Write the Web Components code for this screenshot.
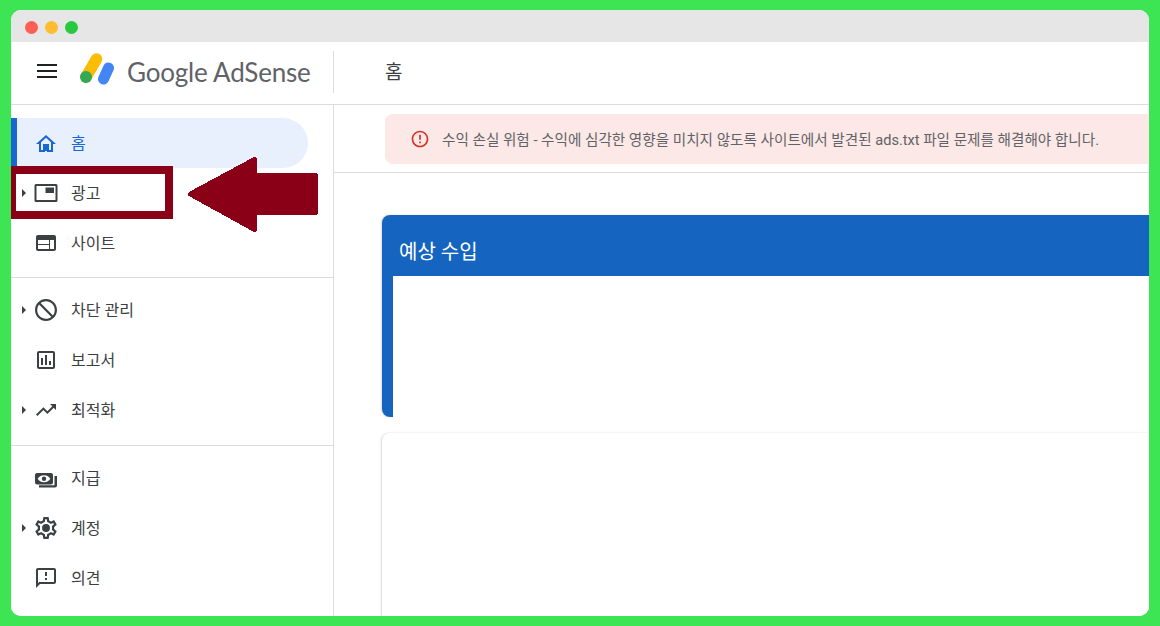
<!DOCTYPE html>
<html lang="ko">
<head>
<meta charset="utf-8">
<title>AdSense</title>
<style>
  html, body { margin: 0; height: 100%; }
  body { font-family: Roboto, "Noto Sans CJK KR", sans-serif; background: #3de554; overflow: hidden; }
</style>
</head>
<body>
<app-window>
  <title-bar></title-bar>
  <top-bar heading="홈"></top-bar>
  <side-nav slot="nav">
    <nav-item icon="home" active>홈</nav-item>
    <nav-item icon="ads" caret>광고</nav-item>
    <nav-item icon="web">사이트</nav-item>
    <nav-rule></nav-rule>
    <nav-item icon="block" caret>차단 관리</nav-item>
    <nav-item icon="report">보고서</nav-item>
    <nav-item icon="trend" caret>최적화</nav-item>
    <nav-rule style="margin-top:10px"></nav-rule>
    <nav-item icon="pay">지급</nav-item>
    <nav-item icon="gear" caret>계정</nav-item>
    <nav-item icon="feedback">의견</nav-item>
  </side-nav>
  <main-pane slot="main">
    <alert-bar>수익 손실 위험 - 수익에 심각한 영향을 미치지 않도록 사이트에서 발견된 ads.txt 파일 문제를 해결해야 합니다.</alert-bar>
    <earnings-card>예상 수입</earnings-card>
    <blank-card></blank-card>
  </main-pane>
</app-window>
<arrow-callout></arrow-callout>

<script>
const ICONS = {
  home: `<path d="M12 5.69l5 4.5V18h-2v-6H9v6H7v-7.81l5-4.5M12 3L2 12h3v8h6v-6h2v6h6v-8h3L12 3z"/><rect x="9" y="12" width="6" height="7"/>`,
  ads: `<path fill-rule="evenodd" d="M2 3h20a1.5 1.5 0 0 1 1.5 1.5v15A1.5 1.5 0 0 1 22 21H2a1.5 1.5 0 0 1-1.5-1.5v-15A1.5 1.5 0 0 1 2 3zm.5 2v14h19V5z"/><rect x="11.5" y="6.5" width="8.5" height="5.5"/>`,
  web: `<path d="M20 4H4c-1.1 0-2 .9-2 2v12c0 1.1.9 2 2 2h16c1.1 0 2-.9 2-2V6c0-1.1-.9-2-2-2zM15 18H4v-4h11v4zm0-5H4V9h11v4zm5 5h-4V9h4v9z"/>`,
  block: `<path d="M12 1C5.93 1 1 5.93 1 12s4.93 11 11 11 11-4.93 11-11S18.07 1 12 1zM3.2 12c0-4.86 3.94-8.8 8.8-8.8 2.04 0 3.9.7 5.39 1.86L5.06 17.39A8.75 8.75 0 0 1 3.2 12zm8.8 8.8c-2.04 0-3.9-.7-5.39-1.86L18.94 6.61A8.75 8.75 0 0 1 20.8 12c0 4.86-3.94 8.8-8.8 8.8z" transform="matrix(-1 0 0 1 24 0)"/>`,
  report: `<path d="M19 3H5c-1.1 0-2 .9-2 2v14c0 1.1.9 2 2 2h14c1.1 0 2-.9 2-2V5c0-1.1-.9-2-2-2zm0 16H5V5h14v14zM7 10h2v7H7zm4-3h2v10h-2zm4 6h2v4h-2z"/>`,
  trend: `<path d="M16 6l2.29 2.29-4.88 4.88-4-4L2 16.59 3.41 18l6-6 4 4 6.3-6.29L22 12V6z"/>`,
  pay: `<path fill-rule="evenodd" d="M3 7h14a2 2 0 0 1 2 2v7.5a2 2 0 0 1-2 2H3a2 2 0 0 1-2-2V9a2 2 0 0 1 2-2zm7 2.2c-3 0-5.4 1.6-6.3 3.5.9 1.9 3.3 3.5 6.3 3.5s5.4-1.6 6.3-3.5c-.9-1.9-3.3-3.5-6.3-3.5z"/><circle cx="10" cy="12.7" r="2.2"/><path d="M20.5 10H23v9.5a2 2 0 0 1-2 2H5v-2.3h15.5z"/>`,
  gear: `<g transform="translate(12 12) scale(1.1) translate(-12 -12)"><path d="M19.43 12.98c.04-.32.07-.64.07-.98 0-.34-.03-.66-.07-.98l2.11-1.65c.19-.15.24-.42.12-.64l-2-3.46c-.09-.16-.26-.25-.44-.25-.06 0-.12.01-.17.03l-2.49 1c-.52-.4-1.08-.73-1.69-.98l-.38-2.65C14.46 2.18 14.25 2 14 2h-4c-.25 0-.46.18-.49.42l-.38 2.65c-.61.25-1.17.59-1.69.98l-2.49-1c-.06-.02-.12-.03-.18-.03-.17 0-.34.09-.43.25l-2 3.46c-.13.22-.07.49.12.64l2.11 1.65c-.04.32-.07.65-.07.98 0 .33.03.66.07.98l-2.11 1.65c-.19.15-.24.42-.12.64l2 3.46c.09.16.26.25.44.25.06 0 .12-.01.17-.03l2.49-1c.52.4 1.08.73 1.69.98l.38 2.65c.03.24.24.42.49.42h4c.25 0 .46-.18.49-.42l.38-2.65c.61-.25 1.17-.59 1.69-.98l2.49 1c.06.02.12.03.18.03.17 0 .34-.09.43-.25l2-3.46c.12-.22.07-.49-.12-.64l-2.11-1.65zm-1.98-1.71c.04.31.05.52.05.73 0 .21-.02.43-.05.73l-.14 1.13.89.7 1.08.84-.7 1.21-1.27-.51-1.04-.42-.9.68c-.43.32-.84.56-1.25.73l-1.06.43-.16 1.13-.2 1.35h-1.4l-.19-1.35-.16-1.13-1.06-.43c-.43-.18-.83-.41-1.23-.71l-.91-.7-1.06.43-1.27.51-.7-1.21 1.08-.84.89-.7-.14-1.13c-.03-.31-.05-.54-.05-.74s.02-.43.05-.73l.14-1.13-.89-.7-1.08-.84.7-1.21 1.27.51 1.04.42.9-.68c.43-.32.84-.56 1.25-.73l1.06-.43.16-1.13.2-1.35h1.39l.19 1.35.16 1.13 1.06.43c.43.18.83.41 1.23.71l.91.7 1.06-.43 1.27-.51.7 1.21-1.07.85-.89.7.14 1.13z"/><circle cx="12" cy="12" r="3.6"/></g>`,
  feedback: `<path d="M20 2H4c-1.1 0-2 .9-2 2v18l4-4h14c1.1 0 2-.9 2-2V4c0-1.1-.9-2-2-2zm0 14H5.17L4 17.17V4h16v12zM11 12h2v2h-2zm0-6h2v4h-2z"/>`
};

class AppWindow extends HTMLElement {
  constructor() {
    super();
    this.attachShadow({ mode: "open" });
    this.shadowRoot.innerHTML = `
      <style>
      :host { display: block; box-sizing: border-box; height: 626px; padding: 10px 11px; }
      .frame { display: flex; flex-direction: column; height: 606px; border-radius: 10px; overflow: hidden; background: #fff; }
      .body { display: flex; flex: 1; min-height: 0; }
      </style>
      <div class="frame">
        <slot></slot>
        <div class="body">
          <slot name="nav"></slot>
          <slot name="main"></slot>
        </div>
      </div>
    `;
  }
}

class TitleBar extends HTMLElement {
  constructor() {
    super();
    this.attachShadow({ mode: "open" });
    this.shadowRoot.innerHTML = `
      <style>
      :host { display: flex; align-items: center; gap: 7px; height: 32px; padding: 2px 0 0 14px; box-sizing: border-box; background: #e6e6e6; }
      i { width: 13px; height: 13px; border-radius: 50%; display: block; }
      </style>
      <i style="background:#ff5f57"></i><i style="background:#febc2e"></i><i style="background:#28c840"></i>
    `;
  }
}

class TopBar extends HTMLElement {
  constructor() {
    super();
    this.attachShadow({ mode: "open" });
    this.shadowRoot.innerHTML = `
      <style>
      :host { display: flex; align-items: center; height: 63px; box-sizing: border-box; border-bottom: 1px solid #dadce0; background: #fff; }
      .brand { display: flex; align-items: center; width: 323px; height: 42px; box-sizing: border-box; margin-top: -3px; border-right: 1px solid #dadce0; flex: none; }
      .menu { width: 20px; height: 14px; margin: -2px 0 0 26px; flex: none; }
      .mark { width: 36px; height: 34px; margin: -6px 0 0 23px; flex: none; }
      .word { font: 26px Lato, sans-serif; color: #5f6368; margin-left: 11px; white-space: nowrap; letter-spacing: -0.2px; }
      .title { margin: -6px 0 0 51px; font-size: 19px; color: #3c4043; }
      </style>
      <div class="brand">
        <svg class="menu" viewBox="0 0 20 14"><path fill="#202124" d="M0 0h20v2H0zM0 6h20v2H0zM0 12h20v2H0z"/></svg>
        <svg class="mark" viewBox="0 0 36 34">
          <path d="M16.5 7 L6 25" stroke="#fbbc04" stroke-width="11.5" stroke-linecap="round"/>
          <path d="M28.5 16 L23.5 27" stroke="#4285f4" stroke-width="11" stroke-linecap="round"/>
          <circle cx="6" cy="25" r="6" fill="#34a853"/>
        </svg>
        <span class="word">Google AdSense</span>
      </div>
      <span class="title"></span>
    `;
  }
  connectedCallback() {
    this.shadowRoot.querySelector(".title").textContent = this.getAttribute("heading");
  }
}

class SideNav extends HTMLElement {
  constructor() {
    super();
    this.attachShadow({ mode: "open" });
    this.shadowRoot.innerHTML = `
      <style>
      :host { display: block; width: 323px; flex: none; box-sizing: border-box; padding-top: 13px; border-right: 1px solid #dadce0; background: #fff; }
      </style>
      <slot></slot>
    `;
  }
}

class NavRule extends HTMLElement {
  constructor() {
    super();
    this.attachShadow({ mode: "open" });
    this.shadowRoot.innerHTML = `
      <style>
      :host { display: block; height: 1px; margin: 9px 0 7px; background: #dadce0; }
      </style>
    `;
  }
}

class NavItem extends HTMLElement {
  constructor() {
    super();
    this.attachShadow({ mode: "open" });
    this.shadowRoot.innerHTML = `
      <style>
      :host { display: flex; align-items: center; height: 50px; width: 297px; box-sizing: border-box; color: #3c4043; font-size: 16px; position: relative; }
      :host([active]) { background: #e8f0fe; color: #1967d2; border-radius: 0 25px 25px 0; }
      :host([active])::before { content: ""; position: absolute; left: 0; top: 0; bottom: 0; width: 6px; background: #1967d2; }
      .caret { width: 12px; margin-left: 11px; flex: none; }
      .caret span { display: none; width: 0; height: 0; border-left: 4px solid #3c4043; border-top: 4px solid transparent; border-bottom: 4px solid transparent; }
      :host([caret]) .caret span { display: block; }
      svg { width: 24px; height: 24px; margin: 0 13px 0 0; fill: currentColor; flex: none; }
      .label { margin-top: -3px; }
      :host([icon="home"]) svg { margin-top: 2px; }
      </style>
      <div class="caret"><span></span></div>
      <svg viewBox="0 0 24 24"></svg>
      <span class="label"><slot></slot></span>
    `;
  }
  connectedCallback() {
    this.shadowRoot.querySelector("svg").innerHTML = ICONS[this.getAttribute("icon")];
  }
}

class MainPane extends HTMLElement {
  constructor() {
    super();
    this.attachShadow({ mode: "open" });
    this.shadowRoot.innerHTML = `
      <style>
      :host { display: block; flex: 1; min-width: 0; overflow: hidden; background: #fff; }
      </style>
      <slot></slot>
    `;
  }
}

class AlertBar extends HTMLElement {
  constructor() {
    super();
    this.attachShadow({ mode: "open" });
    this.shadowRoot.innerHTML = `
      <style>
      :host { display: block; padding: 9px 0 8px 51px; border-bottom: 1px solid #dadce0; }
      .box { display: flex; align-items: center; height: 50px; padding-left: 25px; border-radius: 8px 0 0 8px; background: #fce8e6; color: #5f6368; font-size: 14.6px; white-space: nowrap; }
      svg { width: 20px; height: 20px; fill: #d93025; margin-right: 12px; flex: none; }
      .text { margin-top: -2px; }
      </style>
      <div class="box">
        <svg viewBox="0 0 24 24"><path d="M11 15h2v2h-2zm0-8h2v6h-2zm.99-5C6.47 2 2 6.48 2 12s4.47 10 9.99 10C17.52 22 22 17.52 22 12S17.52 2 11.99 2zM12 20c-4.42 0-8-3.58-8-8s3.58-8 8-8 8 3.58 8 8-3.58 8-8 8z"/></svg>
        <span class="text"><slot></slot></span>
      </div>
    `;
  }
}

class EarningsCard extends HTMLElement {
  constructor() {
    super();
    this.attachShadow({ mode: "open" });
    this.shadowRoot.innerHTML = `
      <style>
      :host { display: block; height: 202px; margin: 42px 0 0 48px; border-radius: 8px 0 0 8px; background: #1565c0; padding-left: 11px; box-sizing: border-box; box-shadow: -1px 0 2px rgba(60,64,67,.2); }
      .head { height: 61px; display: flex; align-items: center; padding: 9px 0 0 6px; box-sizing: border-box; color: #fff; font-size: 20px; }
      .fill { height: 141px; background: #fff; box-shadow: 0 3px 0 #fff; }
      </style>
      <div class="head"><slot></slot></div>
      <div class="fill"></div>
    `;
  }
}

class BlankCard extends HTMLElement {
  constructor() {
    super();
    this.attachShadow({ mode: "open" });
    this.shadowRoot.innerHTML = `
      <style>
      :host { display: block; height: 260px; margin: 16px 0 0 48px; border-radius: 8px 0 0 0; background: #fff; box-shadow: -1px 0 2px rgba(60,64,67,.2); }
      </style>
    `;
  }
}

class ArrowCallout extends HTMLElement {
  constructor() {
    super();
    this.attachShadow({ mode: "open" });
    this.shadowRoot.innerHTML = `
      <style>
      :host { display: block; position: absolute; left: 11px; top: 157px; width: 310px; height: 76px; pointer-events: none; }
      .box { position: absolute; left: 0; top: 9px; width: 149px; height: 37px; border: solid #8a0016; border-width: 8px 8px 8px 5px; }
      svg { position: absolute; left: 177px; top: 0; width: 130px; height: 76px; shape-rendering: crispEdges; }
      </style>
      <div class="box"></div>
      <svg viewBox="0 0 130 76">
        <path fill="#8a0016" stroke="#8a0016" stroke-width="5" stroke-linejoin="round" d="M2.5 37 L66.5 2.5 V18.5 H127.5 V55.5 H66.5 V72.5 Z"/>
      </svg>
    `;
  }
}

customElements.define("app-window", AppWindow);
customElements.define("title-bar", TitleBar);
customElements.define("top-bar", TopBar);
customElements.define("side-nav", SideNav);
customElements.define("nav-rule", NavRule);
customElements.define("nav-item", NavItem);
customElements.define("main-pane", MainPane);
customElements.define("alert-bar", AlertBar);
customElements.define("earnings-card", EarningsCard);
customElements.define("blank-card", BlankCard);
customElements.define("arrow-callout", ArrowCallout);
</script>
</body>
</html>
